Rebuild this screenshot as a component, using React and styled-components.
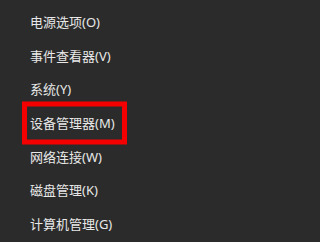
import styled, { createGlobalStyle } from "styled-components";

const GlobalStyle = createGlobalStyle`
  html, body {
    margin: 0;
    padding: 0;
    background: #2b2b2b;
  }
`

const Menu = styled.div`
  width: 304px;
  height: 242px;
  background: #2b2b2b;
  padding-top: 5px;
  box-sizing: border-box;
  display: flex;
  flex-direction: column;
  overflow: hidden;
`

const Item = styled.div`
  position: relative;
  height: 33.6px;
  display: flex;
  align-items: center;
  padding-left: 30px;
  color: #e8e8e8;
  font-family: "Noto Sans", "Noto Sans CJK SC", sans-serif;
  font-size: 13px;
  letter-spacing: 0;

  ${({ $marked }) => $marked && `
    &:after {
      content: "";
      position: absolute;
      left: 22px;
      top: 50%;
      width: 105px;
      height: 43px;
      transform: translateY(-50%);
      box-sizing: border-box;
      border: 5px solid #f50000;
    }
  `}
`

const items = [
  "电源选项(O)",
  "事件查看器(V)",
  "系统(Y)",
  "设备管理器(M)",
  "网络连接(W)",
  "磁盘管理(K)",
  "计算机管理(G)",
]

export default function App() {
  return (
    <>
      <GlobalStyle />
      <Menu>
        {items.map((label, i) => (
          <Item key={label} $marked={i === 3}>{label}</Item>
        ))}
      </Menu>
    </>
  )
}
